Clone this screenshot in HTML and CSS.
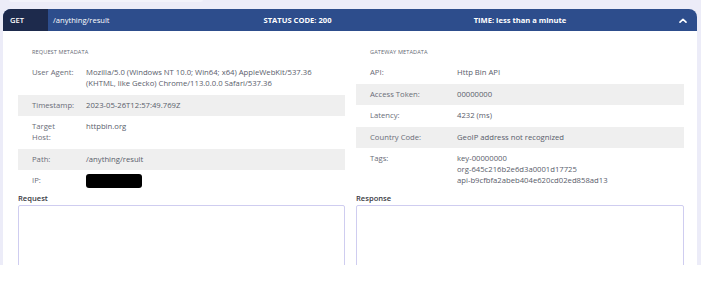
FILE: index.html
```html
<!DOCTYPE html>
<html lang="en">
<head>
<meta charset="utf-8">
<title>Request log</title>
<link rel="stylesheet" href="styles.css">
</head>
<body>
<div class="page">
  <div class="prev-card"></div>
  <section class="card">
    <header class="card-head">
      <span class="method">GET</span>
      <span class="path">/anything/result</span>
      <span class="status">STATUS CODE: 200</span>
      <span class="time">TIME: less than a minute</span>
      <span class="toggle"><svg width="8" height="5" viewBox="0 0 8 5"><path d="M1 4.2 L4 1.3 L7 4.2" fill="none" stroke="#fff" stroke-width="1.6" stroke-linecap="round" stroke-linejoin="round"/></svg></span>
    </header>
    <div class="card-body">
      <div class="meta">
        <h4 class="meta-title">REQUEST METADATA</h4>
        <div class="rows rows-req">
          <div class="row"><span class="k nowrap">User Agent:</span><span class="v">Mozilla/5.0 (Windows NT 10.0; Win64; x64) AppleWebKit/537.36 (KHTML, like Gecko) Chrome/113.0.0.0 Safari/537.36</span></div>
          <div class="row alt"><span class="k">Timestamp:</span><span class="v">2023-05-26T12:57:49.769Z</span></div>
          <div class="row"><span class="k">Target Host:</span><span class="v">httpbin.org</span></div>
          <div class="row alt"><span class="k">Path:</span><span class="v">/anything/result</span></div>
          <div class="row"><span class="k">IP:</span><span class="v"><span class="redacted"></span></span></div>
        </div>
      </div>
      <div class="meta">
        <h4 class="meta-title">GATEWAY METADATA</h4>
        <div class="rows rows-gw">
          <div class="row"><span class="k">API:</span><span class="v">Http Bin API</span></div>
          <div class="row alt"><span class="k">Access Token:</span><span class="v">00000000</span></div>
          <div class="row"><span class="k">Latency:</span><span class="v">4232 (ms)</span></div>
          <div class="row alt"><span class="k">Country Code:</span><span class="v">GeoIP address not recognized</span></div>
          <div class="row"><span class="k">Tags:</span><span class="v">key-00000000<br>org-645c216b2e6d3a0001d17725<br>api-b9cfbfa2abeb404e620cd02ed858ad13</span></div>
        </div>
      </div>
      <div class="payload">
        <div class="payload-label">Request</div>
        <div class="payload-box"></div>
      </div>
      <div class="payload">
        <div class="payload-label">Response</div>
        <div class="payload-box"></div>
      </div>
    </div>
  </section>
</div>
</body>
</html>
```

FILE: styles.css
```css
html, body {
  margin: 0;
  padding: 0;
  background: #ffffff;
}
body {
  font-family: "Open Sans", "Liberation Sans", sans-serif;
}
.page {
  height: 265px;
  overflow: hidden;
  background: #ececf8;
  padding: 0 4px 0 3px;
  box-sizing: border-box;
}
.prev-card {
  margin-left: 6px;
  width: 194px;
  height: 2px;
  background: #f3f3fb;
  border-radius: 0 0 4px 4px;
}
.card {
  margin-top: 7px;
  background: #fff;
  border-radius: 8px 8px 0 0;
}
.card-head {
  display: grid;
  grid-template-columns: 45px 182px 135px 310px 22px;
  height: 22px;
  align-items: center;
  background: #2d4d8c;
  color: #fff;
  font-size: 7.6px;
  border-radius: 8px 8px 0 0;
  overflow: hidden;
}
.method {
  align-self: stretch;
  display: flex;
  align-items: center;
  padding-left: 7px;
  background: #1d2a4c;
  font-weight: 600;
}
.path {
  padding-left: 5px;
}
.status, .time {
  text-align: center;
  font-weight: 700;
}
.toggle {
  display: flex;
  justify-content: center;
  padding-right: 6px;
}
.toggle svg {
  display: block;
}
.card-body {
  display: grid;
  grid-template-columns: 327px 328px;
  column-gap: 11px;
  padding: 0 13px 0 15px;
}
.meta-title {
  margin: 0;
  padding: 17px 0 0 14px;
  height: 14px;
  font-size: 5.6px;
  font-weight: 400;
  color: #666a74;
  letter-spacing: 0.1px;
  line-height: 8px;
  box-sizing: content-box;
}
.rows {
  display: flex;
  flex-direction: column;
}
.row {
  display: grid;
  padding: 5.25px 14px 5.25px 14px;
  font-size: 7.7px;
  line-height: 11px;
  color: #595d6b;
}
.rows-req .row {
  grid-template-columns: 54px 1fr;
}
.rows-gw .row {
  grid-template-columns: 87px 1fr;
}
.row .k {
  color: #6a6d78;
  padding-right: 14px;
}
.row .k.nowrap {
  white-space: nowrap;
  padding-right: 0;
}
.row.alt {
  background: #efefef;
}
.redacted {
  display: inline-block;
  width: 56px;
  height: 14px;
  margin-top: -1px;
  vertical-align: top;
  background: #000;
  border-radius: 3px;
}
.payload {
  margin-top: -1px;
}
.payload-label {
  font-size: 7.6px;
  line-height: 11px;
  font-weight: 600;
  color: #3a3a44;
}
.payload-box {
  margin-top: 1px;
  height: 80px;
  border: 1px solid #cfcdf0;
  border-radius: 2px;
  background: #fff;
}
```
